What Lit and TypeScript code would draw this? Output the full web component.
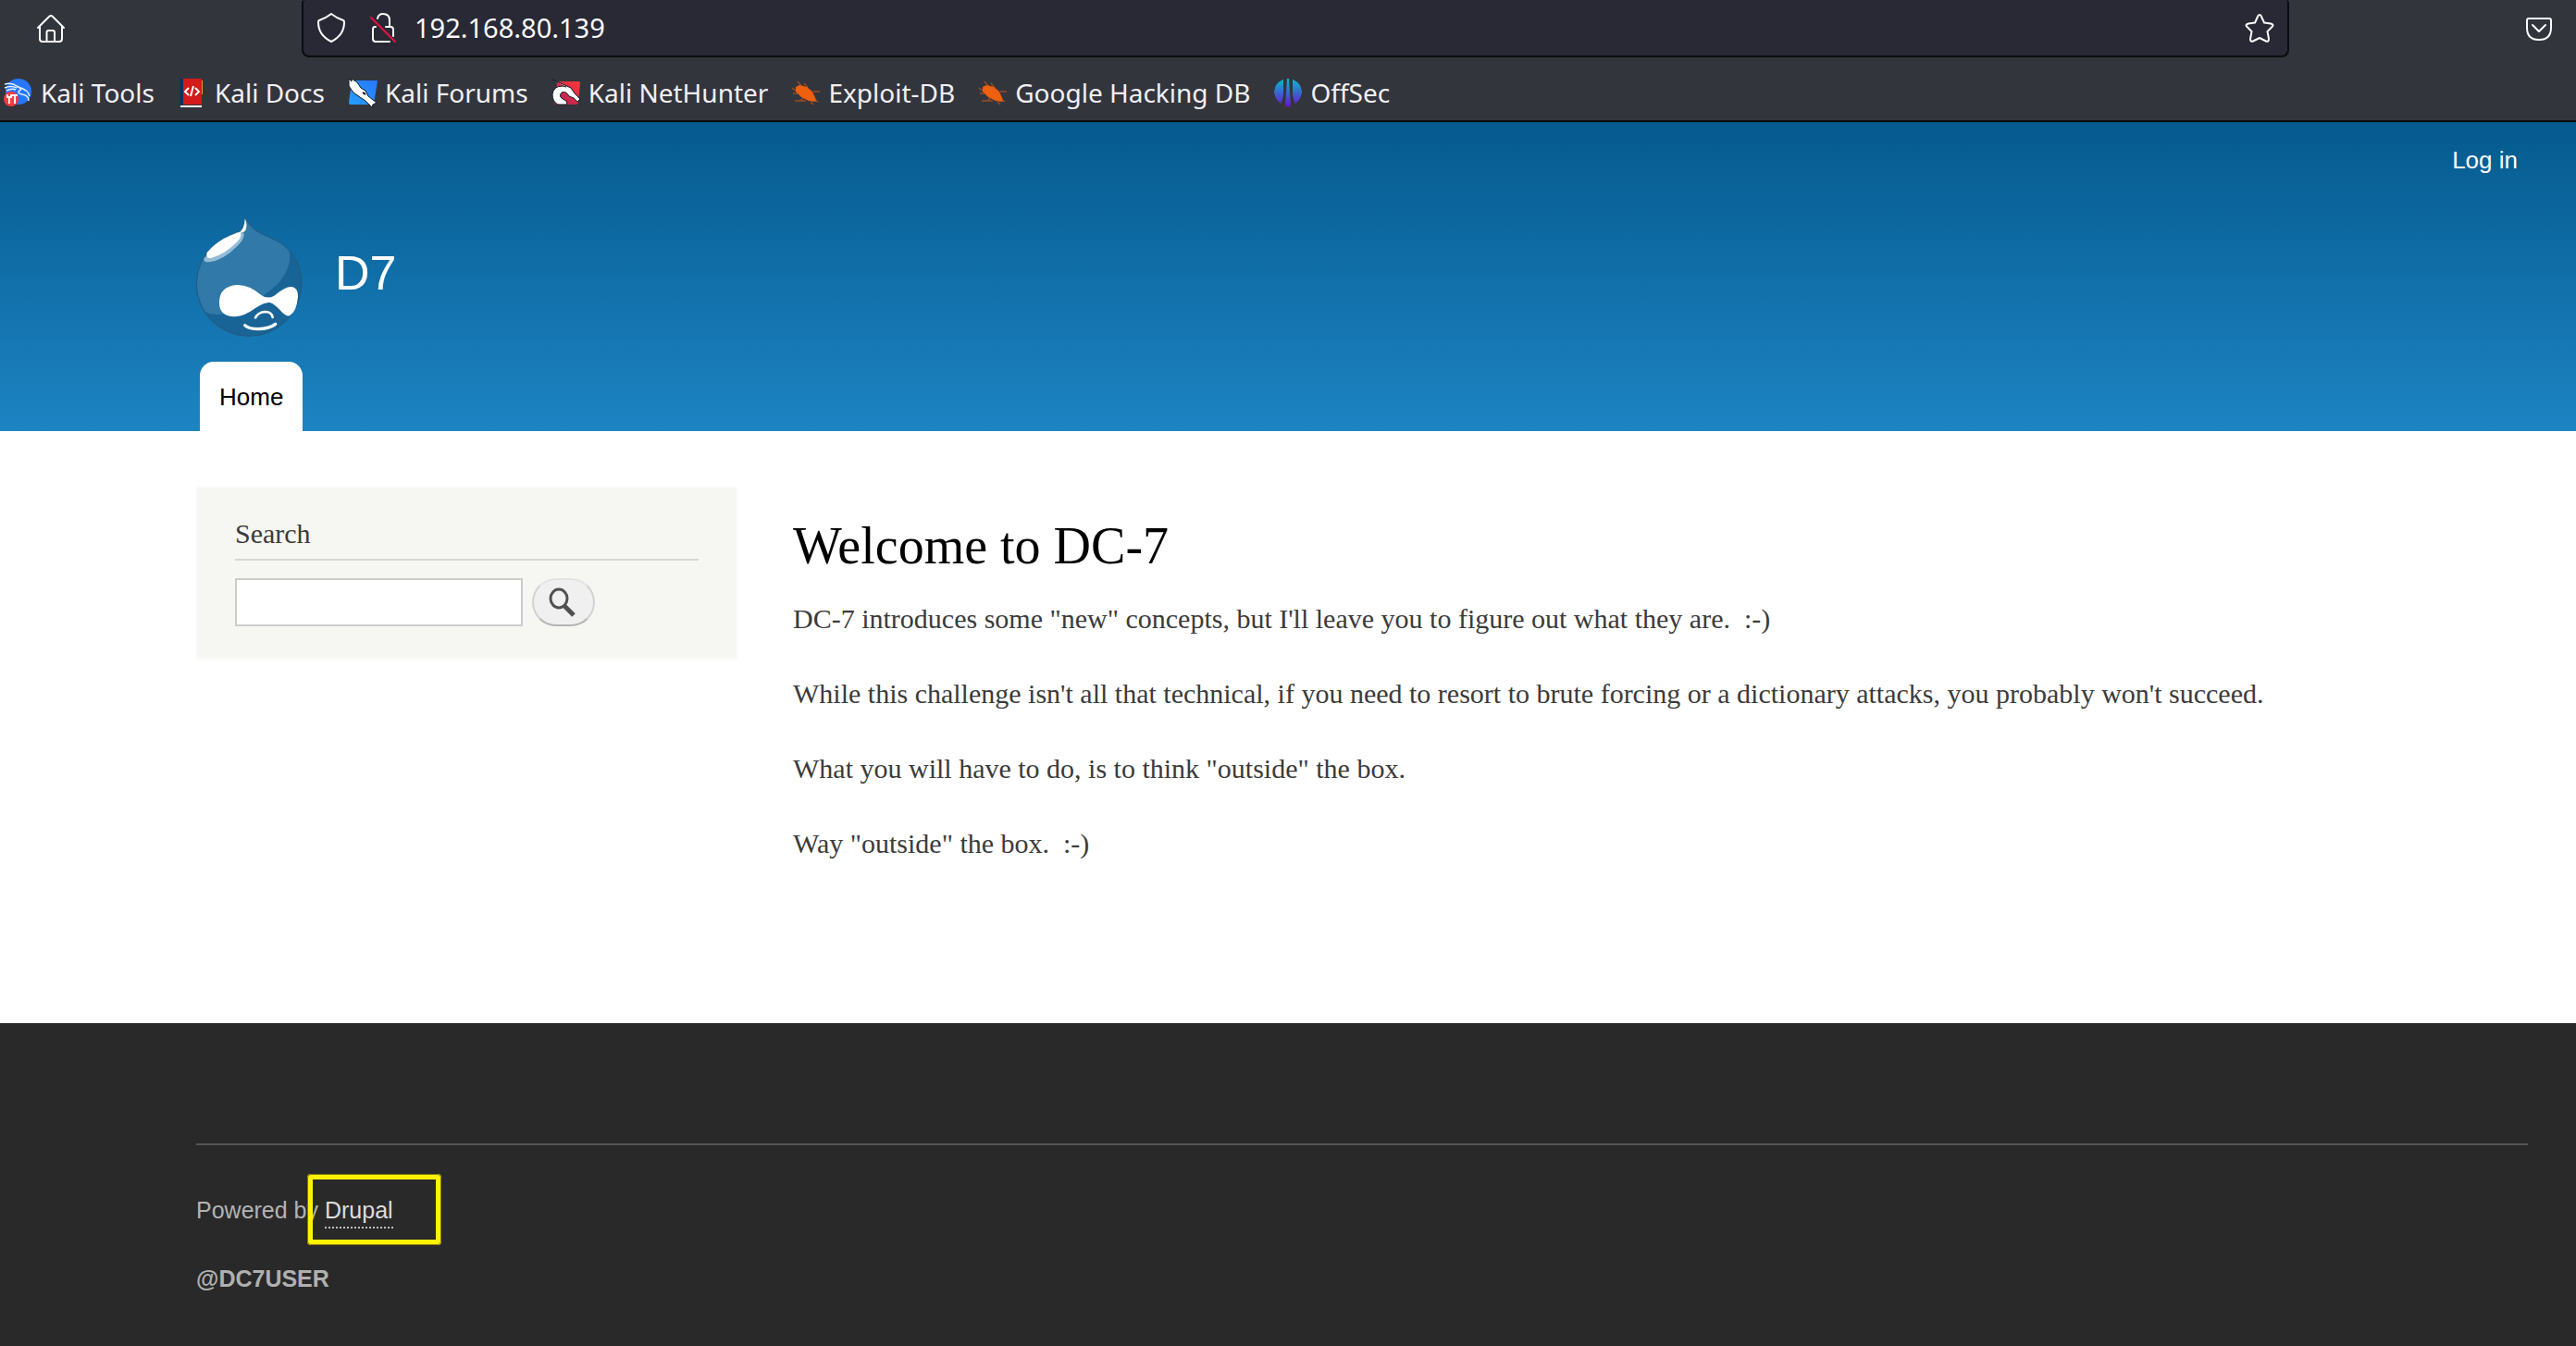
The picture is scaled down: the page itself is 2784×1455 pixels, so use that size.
import { LitElement, html, css, svg } from "lit";
import { customElement } from "lit/decorators.js";

const glyphs = {
  home: svg`<g fill="none" stroke="#fbfbfe" stroke-width="2" stroke-linejoin="round" stroke-linecap="round"><path d="M2 15 14 3Q16 1 18 3L30 15M4 13.500V27Q4 30 7 30H25Q28 30 28 27V13.500M11.500 30V20Q11.500 18 13.500 18H18Q20 18 20 20V30"/></g>`,
  shield: svg`<path d="M16 1Q21 5 29 8Q30 8.500 30 10Q30 24 16 31Q2 24 2 10Q2 8.500 3 8Q11 5 16 1Z" fill="none" stroke="#fbfbfe" stroke-width="2" stroke-linejoin="round"/>`,
  lock: svg`<g fill="none" stroke="#fbfbfe" stroke-width="2" stroke-linecap="round"><path d="M9 6Q10 1 15 1Q22 1 22 8V14M7 15H6Q4 15 4 18V28Q4 31 7 31H22M18 15H23Q26 15 26 18V25"/><path d="M2 5 28 31" stroke="#e8123f"/></g>`,
  star: svg`<path d="M16 2Q17.500 2 18 4L21 10.500L28 11.500Q32 12.500 29.500 15L24.500 20L26 28Q26 31.500 23 30.500L16 27L9 30.500Q6 31.500 6 28L7.500 20L2.500 15Q0 12.500 4 11.500L11 10.500L14 4Q14.500 2 16 2Z" fill="none" stroke="#fbfbfe" stroke-width="2" stroke-linejoin="round"/>`,
  pocket: svg`<g fill="none" stroke="#fbfbfe" stroke-width="2" stroke-linecap="round" stroke-linejoin="round"><path d="M5 5H27Q29 5 29 7V15Q29 28 16 28Q3 28 3 15V7Q3 5 5 5Z"/><path d="M9 12 16 19 23 12"/></g>`,
  search: svg`<ellipse cx="11" cy="12" rx="9" ry="10" fill="none" stroke="#505050" stroke-width="3"/><path d="M17 20 27 30" stroke="#505050" stroke-width="5"/>`,
};

interface Bookmark {
  name: string;
  icon: unknown;
}

const bug = svg`<g stroke="#9a4a22" stroke-width="1.500" fill="none"><path d="M7 4 12 10M14 6 18 11M24 15 31 15M25 24 29 26M21 26 24 29M13 22 10 25M4 25H16M1 11 5 14M2 17H7"/></g><path d="M5 10 9 8 17 10 23 15 27 24 26 26 19 25 11 21 5 15Z" fill="#ee5f0e"/>`;

const bookmarks: Bookmark[] = [
  {
    name: "Kali Tools",
    icon: svg`<circle cx="16" cy="15" r="14" fill="#2777ff"/><path d="M1 7Q9 5 14 9Q21 12 17 14Q14 17 20 18Q27 19 27 25M1 11Q8 8 14 11M3 14Q9 11 13 13M15 10Q27 13 28 20" fill="none" stroke="#e6f0ff" stroke-width="1.500"/><circle cx="8" cy="23" r="8" fill="#f93a3e"/><path d="M6 20V28M12 19V28M9 19H15M4 18V21H8V18" stroke="#fff" stroke-width="2" fill="none"/>`,
  },
  {
    name: "Kali Docs",
    icon: svg`<path d="M4 1H26V29H4Z" fill="#d41a1a"/><path d="M26 3H27V18H26Z" fill="#e8962e"/><path d="M2 1H6V30H2Z" fill="#12305c"/><path d="M3 30H26V32H3Z" fill="#fff"/><path d="M12 11 8 15 12 19M19 11 23 15 19 19M17 9 14 20" stroke="#fff" stroke-width="2" fill="none"/>`,
  },
  {
    name: "Kali Forums",
    icon: svg`<defs><linearGradient id="forum" x1="1" x2="0" y2="1"><stop stop-color="#2777ff"/><stop offset="1" stop-color="#279fff"/></linearGradient></defs><path d="M6 3H31Q32 3 32 4L28 28Q28 29 27 29H3Q1 29 1 27L4 4Z" fill="url(#forum)"/><path d="M1 1 4 4 4 1 10 5 14 11 19 14 22 20 31 27 27 29 26 32 19 25 13 21 6 16 1 9Z" fill="#fff" stroke="#101820"/><path d="M16 16 19 18" stroke="#000" stroke-width="2"/>`,
  },
  {
    name: "Kali NetHunter",
    icon: svg`<defs><linearGradient id="hunter" x1="1" x2="0" y2="1"><stop stop-color="#ff3838"/><stop offset="1" stop-color="#a71d5a"/></linearGradient></defs><path d="M8 4H29Q31 4 31 6L29 27Q28 29 26 29H3L6 6Z" fill="url(#hunter)"/><path d="M1 2 21 11 25 17 31 23 28 26 24 22 19 20Q16 14 11 16Q6 21 16 25L17 29H7Q1 26 1 18Q2 9 12 9L16 10" fill="#fff" stroke="#101820"/>`,
  },
  { name: "Exploit-DB", icon: bug },
  { name: "Google Hacking DB", icon: bug },
  {
    name: "OffSec",
    icon: svg`<defs><linearGradient id="offsec" gradientUnits="userSpaceOnUse" x1="0" y1="1" x2="0" y2="31"><stop stop-color="#06bccb"/><stop offset="1" stop-color="#6a14cf"/></linearGradient></defs><path d="M11 2V16Q11 23 8 28Q1 22 1 15Q2 5 11 2ZM21 2V16Q21 23 24 28Q31 22 31 15Q30 5 21 2ZM15 1H17L19 31H13Z" fill="url(#offsec)"/>`,
  },
];

const paragraphs = [
  "DC-7 introduces some \"new\" concepts, but I'll leave you to figure out what they are.\u00a0 :-)",
  "While this challenge isn't all that technical, if you need to resort to brute forcing or a dictionary attacks, you probably won't succeed.",
  "What you will have to do, is to think \"outside\" the box.",
  "Way \"outside\" the box.\u00a0 :-)",
];

const glyph = (shape: unknown) =>
  html`<svg class="glyph" viewBox="0 0 32 32" aria-hidden="true">${shape}</svg>`;

@customElement("browser-chrome")
export class BrowserChrome extends LitElement {
  static styles = css`
    :host { display: block; background: #33353d; border-bottom: 2px solid #0c0c0d; color: #fbfbfe; font-family: "Noto Sans", sans-serif; }
    * { box-sizing: border-box; }
    button { border: 0; background: none; padding: 0; }
    .glyph { display: block; width: 32px; height: 32px; flex: none; }
    .toolbar { display: grid; grid-template-columns: 326px 1fr 310px; align-items: center; }
    .home { justify-self: start; margin-left: 39px; }
    .pocket { justify-self: end; margin-right: 24px; }
    .address { display: flex; align-items: center; height: 62px; padding: 0 14px; border: 2px solid #0c0c0d; border-top: 0; border-radius: 4px 4px 8px 8px; background: #282934; }
    .url { flex: 1; min-width: 0; margin-left: 17px; padding: 0; border: 0; outline: 0; background: none; color: inherit; font: 29px/40px "Noto Sans", sans-serif; }
    .lock { margin-left: 25px; }
    .bookmarks { display: flex; align-items: center; gap: 25px; padding: 20px 4px 12px; font-size: 28px; line-height: 36px; }
    .bookmark { display: flex; align-items: center; gap: 8px; color: #f0f0f4; text-decoration: none; white-space: nowrap; }
  `;

  render() {
    return html`
      <div class="toolbar">
        <button class="home" aria-label="Home">${glyph(glyphs.home)}</button>
        <div class="address">
          <button aria-label="Tracking protection">${glyph(glyphs.shield)}</button>
          <button class="lock" aria-label="Connection not secure">${glyph(glyphs.lock)}</button>
          <input class="url" aria-label="Address" value="192.168.80.139" />
          <button aria-label="Bookmark this page">${glyph(glyphs.star)}</button>
        </div>
        <button class="pocket" aria-label="Save to Pocket">${glyph(glyphs.pocket)}</button>
      </div>
      <nav class="bookmarks" aria-label="Bookmarks">
        ${bookmarks.map((b) => html`<a class="bookmark" href="#">${glyph(b.icon)}<span>${b.name}</span></a>`)}
      </nav>
    `;
  }
}

@customElement("app-root")
export class AppRoot extends LitElement {
  static styles = css`
    :host { display: flex; flex-direction: column; min-height: 100vh; background: #fff; color: #3b3b3b; font-family: "Liberation Serif", serif; font-size: 30px; line-height: 45px; }
    * { box-sizing: border-box; }
    h1, h2, p { margin: 0; font-weight: 400; }
    a { color: inherit; text-decoration: none; }
    header { display: flex; flex-direction: column; height: 334px; padding: 22px 63px 0 212px; background: linear-gradient(#055a8e, #1d84c3); color: #fff; font: 26px/38px "Liberation Sans", sans-serif; }
    .login { align-self: flex-end; }
    .brand { display: flex; align-items: center; gap: 36px; margin-top: 42px; }
    .logo { display: block; width: 114px; height: 130px; }
    .name { padding-bottom: 8px; font-size: 52px; line-height: 60px; }
    .tabs { display: flex; margin-top: auto; padding-left: 4px; }
    .tab { padding: 19px 21px 18px; border-radius: 15px 15px 0 0; background: #fff; color: #000; text-shadow: 0 2px 1px #eee; }
    main { display: grid; grid-template-columns: 585px 1fr; gap: 60px; align-items: start; padding: 60px 52px 172px 212px; }
    .sidebar { padding: 26px 40px 34px; border: 2px solid #f9f9f9; background: #f6f6f2; }
    .sidebar h2 { padding-bottom: 5px; border-bottom: 2px solid #d6d6d6; font-size: 30px; }
    .search { display: flex; gap: 10px; margin-top: 19px; }
    .search input { width: 311px; height: 52px; padding: 4px 8px; border: 2px solid #ccc; background: #fff; font: inherit; }
    .search button { display: grid; place-items: center; width: 68px; height: 52px; padding: 0; border: 2px solid #d2d2d2; border-top-color: #e4e4e4; border-bottom-color: #b4b4b4; border-radius: 26px; background: #f0f0f0; }
    .search svg { width: 32px; height: 32px; }
    .content { display: flex; flex-direction: column; gap: 36px; padding-top: 30px; }
    .content h1 { margin-bottom: -14px; color: #000; font-size: 56px; line-height: 68px; }
    footer { flex: 1; padding: 130px 52px 40px 212px; background: #292929; color: #b3b3b3; font: 25px/38px "Liberation Sans", sans-serif; }
    .credits { display: grid; gap: 36px; padding-top: 51px; border-top: 2px solid #555; }
    .credits strong { color: #b0b0b0; }
    .drupal { position: relative; color: #ddd; padding-bottom: 4px; border-bottom: 2px dotted #c0c0c0; }
    .marker { position: absolute; left: -19px; top: -25px; width: 145px; height: 77px; border: 6px solid #fff200; border-radius: 4px; outline: 1px solid #7d7717; outline-offset: -1px; pointer-events: none; }
  `;

  render() {
    return html`
      <browser-chrome></browser-chrome>
      <header>
        <a class="login" href="#">Log in</a>
        <div class="brand">
          <svg class="logo" viewBox="66 73 342 390" aria-hidden="true">
            <defs>
              <clipPath id="drop"><path d="M226 76Q238 108 272 126L328 152Q407 198 407 292A170 169 0 0 1 67 292Q70 205 130 164Q160 147 200 124Q224 108 226 76Z"/></clipPath>
            </defs>
            <g clip-path="url(#drop)">
              <path d="M66 73H410V465H66Z" fill="#196496"/>
              <path d="M66 73H340L368 182Q378 240 330 292Q285 335 225 365Q150 405 93 383L66 385Z" fill="#3079a8"/>
            </g>
            <path d="M226 76Q238 108 272 126L328 152Q407 198 407 292A170 169 0 0 1 67 292Q70 205 130 164Q160 147 200 124Q224 108 226 76Z" fill="none" stroke="#24587d" stroke-width="3"/>
            <path d="M92 207Q88 222 108 221Q158 215 207 161Q224 142 220 126L206 124Z" fill="#93bbd5"/>
            <path d="M101 190Q132 153 179 134Q211 117 211 132Q211 143 200 154Q158 196 116 207Q96 211 101 190Z" fill="#fff"/>
            <path d="M224 79Q234 103 226 119Q218 128 204 127Q224 113 224 79Z" fill="#fff"/>
            <path d="M141 350Q142 298 202 295Q238 295 277 328Q297 342 319 330Q354 300 376 301Q397 304 396 334Q392 382 369 395Q358 398 343 382Q320 356 304 352Q289 350 257 371Q223 397 190 398Q140 397 141 350Z" fill="#fff"/>
            <path d="M258 401Q268 383 290 382Q310 382 314 400" fill="none" stroke="#fff" stroke-width="8" stroke-linecap="round"/>
            <path d="M224 426Q236 438 267 438Q304 437 323 422" fill="none" stroke="#fff" stroke-width="10" stroke-linecap="round"/>
          </svg>
          <a class="name" href="#">D7</a>
        </div>
        <nav class="tabs" aria-label="Main navigation"><a class="tab" href="#">Home</a></nav>
      </header>
      <main>
        <aside class="sidebar">
          <h2><label for="query">Search</label></h2>
          <form class="search" role="search" @submit=${(e: Event) => e.preventDefault()}>
            <input id="query" type="search" />
            <button aria-label="Search"><svg viewBox="0 0 32 32">${glyphs.search}</svg></button>
          </form>
        </aside>
        <article class="content">
          <h1>Welcome to DC-7</h1>
          ${paragraphs.map((text) => html`<p>${text}</p>`)}
        </article>
      </main>
      <footer>
        <div class="credits">
          <p>Powered by <a class="drupal" href="#">Drupal<span class="marker"></span></a></p>
          <strong>@DC7USER</strong>
        </div>
      </footer>
    `;
  }
}
